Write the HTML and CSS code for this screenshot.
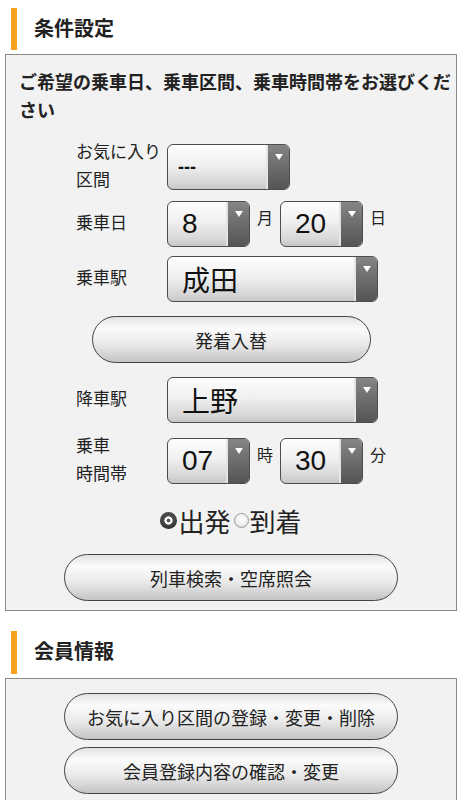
FILE: index.html
```html
<!DOCTYPE html>
<html lang="ja">
<head>
<meta charset="utf-8">
<title>条件設定</title>
<link rel="stylesheet" href="styles.css">
</head>
<body>
<h2 class="sec-title sec-first">条件設定</h2>
<div class="box">
  <p class="lead">ご希望の乗車日、乗車区間、乗車時間帯をお選びください</p>
  <div class="row row-fav">
    <span class="label">お気に入り区間</span>
    <div class="sel sel-fav"><span class="val val-small">---</span><span class="arrow"></span></div>
  </div>
  <div class="row row-date">
    <span class="label">乗車日</span>
    <div class="sel sel-num"><span class="val">8</span><span class="arrow"></span></div>
    <span class="unit">月</span>
    <div class="sel sel-num"><span class="val">20</span><span class="arrow"></span></div>
    <span class="unit">日</span>
  </div>
  <div class="row row-from">
    <span class="label">乗車駅</span>
    <div class="sel sel-st"><span class="val">成田</span><span class="arrow"></span></div>
  </div>
  <div class="btn btn-swap">発着入替</div>
  <div class="row row-to">
    <span class="label">降車駅</span>
    <div class="sel sel-st"><span class="val">上野</span><span class="arrow"></span></div>
  </div>
  <div class="row row-time">
    <span class="label">乗車<br>時間帯</span>
    <div class="sel sel-num"><span class="val">07</span><span class="arrow"></span></div>
    <span class="unit">時</span>
    <div class="sel sel-num"><span class="val">30</span><span class="arrow"></span></div>
    <span class="unit">分</span>
  </div>
  <div class="radios">
    <span class="radio radio-on"></span><span class="rtext">出発</span>
    <span class="radio radio-off"></span><span class="rtext">到着</span>
  </div>
  <div class="btn btn-wide btn-search">列車検索・空席照会</div>
</div>

<h2 class="sec-title sec-second">会員情報</h2>
<div class="box box-member">
  <div class="btn btn-wide btn-m1">お気に入り区間の登録・変更・削除</div>
  <div class="btn btn-wide btn-m2">会員登録内容の確認・変更</div>
</div>
</body>
</html>
```

FILE: styles.css
```css
html, body {
  margin: 0;
  padding: 0;
  background: #ffffff;
}
body {
  font-family: "Liberation Sans", "Noto Sans CJK JP", sans-serif;
  color: #222;
  width: 463px;
}
.sec-title {
  margin: 0 0 0 11px;
  height: 42px;
  line-height: 42px;
  border-left: 6px solid #f7a21b;
  padding-left: 17px;
  font-size: 20px;
  font-weight: bold;
  color: #222;
}
.sec-first { margin-top: 8px; }
.sec-second { margin-top: 20px; height: 43px; line-height: 43px; }
.box {
  margin: 4px 6px 0 5px;
  border: 1px solid #8a8a8a;
  background: #f2f2f2;
  padding: 14px 4px 9px 13px;
  display: flex;
  flex-direction: column;
}
.lead {
  margin: 0;
  font-size: 18px;
  line-height: 28px;
  font-weight: bold;
}
.row {
  display: flex;
  align-items: center;
  margin-left: 57px;
}
.row-fav { margin-top: 14px; }
.row-date { margin-top: 6px; }
.row-from { margin-top: 9px; }
.row-to { margin-top: 14px; }
.row-time { margin-top: 10px; }
.label {
  width: 89px;
  margin-right: 2px;
  font-size: 17px;
  line-height: 28px;
  flex: none;
}
.sel {
  display: flex;
  height: 44px;
  border: 1px solid #4d4d4d;
  border-radius: 6px;
  overflow: hidden;
  background: linear-gradient(to bottom, #fefefe 0%, #f0f0f0 45%, #d6d6d6 85%, #c6c6c6 100%);
  box-sizing: content-box;
  flex: none;
}
.sel-fav { width: 121px; }
.sel-num { width: 81px; }
.sel-st { width: 209px; }
.val {
  flex: 1;
  display: flex;
  align-items: center;
  padding-left: 14px;
  font-size: 28px;
  color: #111;
}
.val-small {
  padding-left: 10px;
  font-size: 18px;
  font-weight: bold;
}
.arrow {
  width: 21px;
  flex: none;
  border-left: 2px solid #e4e4e4;
  background: linear-gradient(to bottom, #858585 0%, #6a6a6a 55%, #555 100%);
  position: relative;
}
.arrow::after {
  content: "";
  position: absolute;
  left: 7px;
  top: 9px;
  border-left: 4px solid transparent;
  border-right: 4px solid transparent;
  border-top: 6px solid #fff;
}
.unit {
  font-size: 16px;
  margin: 0 7px 10px 7px;
  line-height: 20px;
}
.btn {
  align-self: center;
  box-sizing: border-box;
  height: 47px;
  border: 1px solid #444;
  border-radius: 24px;
  display: flex;
  align-items: center;
  justify-content: center;
  font-size: 18px;
  color: #222;
  background: linear-gradient(to bottom, #e2e2e2 0%, #fbfbfb 25%, #eaeaea 60%, #c4c4c4 100%);
}
.box .btn { margin-right: 9px; }
.btn-swap {
  width: 279px;
  margin-top: 14px;
}
.btn-wide { width: 334px; }
.btn-search { margin-top: 16px; }
.radios {
  display: flex;
  align-items: center;
  justify-content: center;
  margin-top: 13px;
  margin-right: 9px;
  height: 36px;
  font-size: 26px;
}
.rtext { margin: 0 1px; }
.radio {
  display: inline-block;
  border-radius: 50%;
  box-sizing: border-box;
  flex: none;
}
.radio-on {
  width: 17px;
  height: 17px;
  margin-left: 1px;
  background: radial-gradient(circle at center, #555 0 1.6px, #fff 2.2px 3.8px, #4a4a4a 4.4px 100%);
  box-shadow: inset 0 -2px 3px rgba(0,0,0,0.4);
}
.radio-off {
  width: 15px;
  height: 15px;
  margin-left: 2px;
  border: 1px solid #9a9a9a;
  background: radial-gradient(circle at 50% 40%, #ffffff 0%, #f0f0f0 50%, #cfcfcf 100%);
}
.box-member {
  padding-top: 14px;
  padding-bottom: 20px;
}
.btn-m2 { margin-top: 7px; }
```
